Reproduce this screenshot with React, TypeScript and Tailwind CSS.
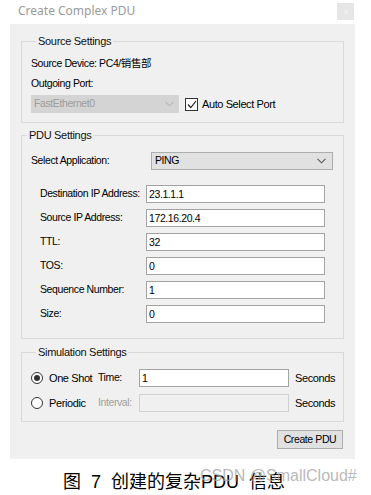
const FIELDS = [
  { label: "Destination IP Address:", value: "23.1.1.1" },
  { label: "Source IP Address:", value: "172.16.20.4" },
  { label: "TTL:", value: "32" },
  { label: "TOS:", value: "0" },
  { label: "Sequence Number:", value: "1" },
  { label: "Size:", value: "0" },
];

function Chevron({ color }: { color: string }) {
  return (
    <svg width="9" height="6" viewBox="0 0 9 6" fill="none">
      <polyline points="0.5,0.8 4.5,4.8 8.5,0.8" stroke={color} strokeWidth="1.1" />
    </svg>
  );
}

function Legend({ children }: { children: React.ReactNode }) {
  return (
    <legend className="ml-[5px] px-[2px] leading-[14px] text-[11px] tracking-[-0.3px] text-[#111]">
      {children}
    </legend>
  );
}

function TextBox({ value, width, disabled }: { value?: string; width: string; disabled?: boolean }) {
  return (
    <div
      className={`${width} h-[18px] border pl-[2px] leading-[16px] text-[10.5px] text-black ${
        disabled ? "border-[#d0d0d0] bg-[#f0f0f0]" : "border-[#a3a3a3] bg-white"
      }`}
    >
      {value}
    </div>
  );
}

function Radio({ checked }: { checked?: boolean }) {
  return (
    <div className="flex h-[12px] w-[12px] items-center justify-center rounded-full border border-[#333] bg-white">
      {checked && <div className="h-[6px] w-[6px] rounded-full bg-[#333]" />}
    </div>
  );
}

export default function App() {
  return (
    <div className="h-[495px] w-[371px] overflow-hidden bg-white font-['Liberation_Sans','Noto_Sans_CJK_SC',sans-serif] text-[10.5px] tracking-[-0.4px] text-black">
      {/* title bar */}
      <div className="flex h-[24px] items-start justify-between">
        <div className="ml-[18px] mt-[3px] font-['Noto_Sans',sans-serif] text-[12px] leading-[16px] tracking-normal text-[#9a9a9a]">
          Create Complex PDU
        </div>
        <div className="mr-[17px] mt-[3px] flex h-[17px] w-[17px] items-center justify-center bg-[#e6e6e6] text-[8px] leading-none text-[#f8f8f8]">
          x
        </div>
      </div>

      {/* dialog body */}
      <div className="ml-[10px] h-[435px] w-[345px] bg-[#f0f0f0] px-[11px] pt-[10px]">
        <fieldset className="border border-[#d9d9d9] pb-[9px] pl-[9px] pt-[8px]">
          <Legend>Source Settings</Legend>
          <div className="leading-[14px]">Source Device: PC4/销售部</div>
          <div className="mt-[6px] leading-[14px]">Outgoing Port:</div>
          <div className="mt-[5px] flex items-center">
            <div className="flex h-[18px] w-[148px] items-center justify-between bg-[#d4d4d4] pl-[3px] pr-[5px] text-[#9c9c9c]">
              <span>FastEthernet0</span>
              <Chevron color="#b8b8b8" />
            </div>
            <div className="ml-[6px] flex h-[13px] w-[13px] items-center justify-center border border-[#333] bg-white">
              <svg width="10" height="9" viewBox="0 0 10 9" fill="none">
                <polyline points="1,4.5 3.8,7.5 9,1" stroke="#222" strokeWidth="1.2" />
              </svg>
            </div>
            <span className="ml-[4px] text-[11px]">Auto Select Port</span>
          </div>
        </fieldset>

        <fieldset className="mt-[5px] border border-[#d9d9d9] pb-[15px] pt-[10px]">
          <Legend>PDU Settings</Legend>
          <div className="flex h-[18px] items-center pl-[9px]">
            <span className="w-[120px]">Select Application:</span>
            <div className="flex h-[18px] w-[182px] items-center justify-between border border-[#adadad] bg-[#e1e1e1] pl-[3px] pr-[6px]">
              <span>PING</span>
              <Chevron color="#555" />
            </div>
          </div>
          <div className="mt-[15px] flex flex-col gap-[6px] pl-[18px]">
            {FIELDS.map((f) => (
              <div key={f.label} className="flex h-[18px] items-center">
                <span className="w-[106px]">{f.label}</span>
                <TextBox value={f.value} width="w-[179px]" />
              </div>
            ))}
          </div>
        </fieldset>

        <fieldset className="mt-[6px] border border-[#d9d9d9] pb-[9px] pl-[9px] pt-[10px]">
          <Legend>Simulation Settings</Legend>
          <div className="flex h-[18px] items-center">
            <div className="flex w-[67px] items-center">
              <Radio checked />
              <span className="ml-[6px] text-[11px]">One Shot</span>
            </div>
            <span className="w-[41px]">Time:</span>
            <TextBox value="1" width="w-[150px]" />
            <span className="ml-[6px] text-[11px]">Seconds</span>
          </div>
          <div className="mt-[7px] flex h-[18px] items-center">
            <div className="flex w-[67px] items-center">
              <Radio />
              <span className="ml-[6px] text-[11px]">Periodic</span>
            </div>
            <span className="w-[41px] text-[#a0a0a0]">Interval:</span>
            <TextBox width="w-[150px]" disabled />
            <span className="ml-[6px] text-[11px]">Seconds</span>
          </div>
        </fieldset>

        <div className="mt-[8px] flex justify-end pr-[1px]">
          <div className="flex h-[19px] w-[66px] items-center justify-center border border-[#adadad] bg-[#e1e1e1]">
            Create PDU
          </div>
        </div>
      </div>

      {/* caption */}
      <div className="relative h-[36px]">
        <div className="pl-[63px] pt-[12px] text-[18px] leading-[22px] tracking-normal [word-spacing:5px] text-black">
          图 7 创建的复杂PDU 信息
        </div>
        <div className="absolute left-[200px] top-[7px] font-['Liberation_Sans',sans-serif] text-[16px] leading-[20px] tracking-normal text-[#a6a6a6]/80">
          CSDN @SmallCloud#
        </div>
      </div>
    </div>
  );
}
